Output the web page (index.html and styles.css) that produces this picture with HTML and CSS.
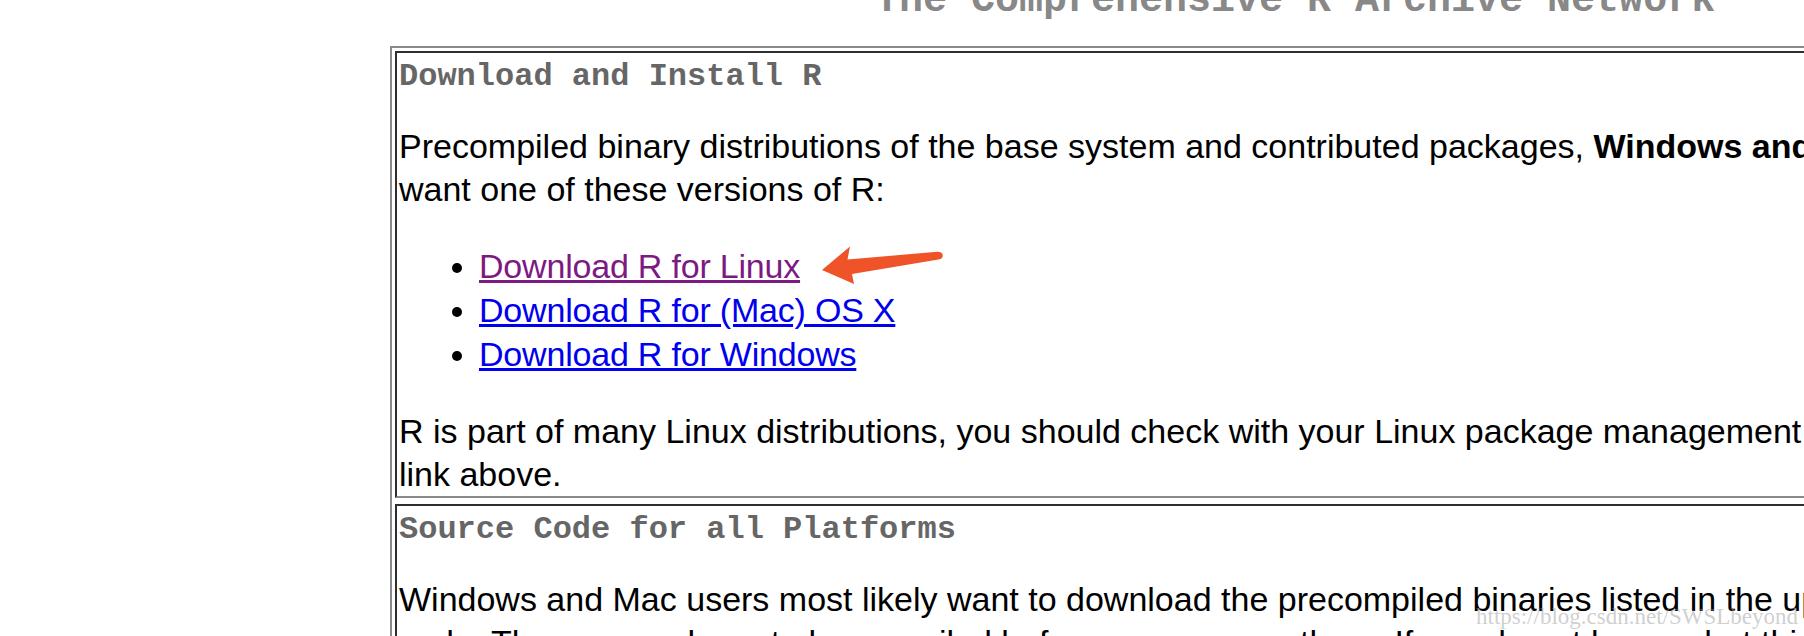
FILE: index.html
```html
<!DOCTYPE html>
<html lang="en">
<head>
    <meta charset="UTF-8">
    <title>The Comprehensive R Archive Network</title>
    <link rel="stylesheet" href="styles.css">
</head>
<body>
    <div class="page">
        <h1 class="site-title">The Comprehensive R Archive Network</h1>
        <div class="frame">
            <!-- 下载安装 -->
            <div class="cell">
                <h3 class="cell-title">Download and Install R</h3>
                <p>Precompiled binary distributions of the base system and contributed packages, <b>Windows and Mac</b> users most likely want one of these versions of R:</p>
                <ul class="dl-list">
                    <li><a class="visited" href="#">Download R for Linux</a></li>
                    <li><a href="#">Download R for (Mac) OS X</a></li>
                    <li><a href="#">Download R for Windows</a></li>
                </ul>
                <p>R is part of many Linux distributions, you should check with your Linux package management system in addition to the link above.</p>
            </div>
            <!-- 源码 -->
            <div class="cell">
                <h3 class="cell-title">Source Code for all Platforms</h3>
                <p>Windows and Mac users most likely want to download the precompiled binaries listed in the upper box, not the source code. The sources have to be compiled before you can use them. If you do not know what this means, you probably do not want to do it!</p>
            </div>
        </div>
    </div>

    <svg class="arrow" width="140" height="54" viewBox="810 236 140 54">
        <path d="M822 270 L850 246.5 L847.5 259.5 L937 251.8 Q942.5 251.6 942.8 255.4 Q942.8 258.8 938.5 259.4 L852 274 L854 284 Z" fill="#ef5428"/>
    </svg>
    <div class="watermark">https://blog.csdn.net/SWSLbeyond</div>
</body>
</html>
```

FILE: styles.css
```css
html,body {
    margin: 0;
    padding: 0;
    background: #fff;
    overflow: hidden;
    font-family: 'Liberation Sans', Arial, sans-serif;
    color: #000;
}
.page {
    padding-left: 390px;
}
.site-title {
    margin: -22px 0 22px 485px;
    font: bold 40px/46px 'Liberation Mono', 'Courier New', monospace;
    color: #888;
    white-space: nowrap;
}
.frame {
    width: 1817px;
    box-sizing: border-box;
    border: 2px solid;
    border-color: #8a8a8a #333 #333 #8a8a8a;
    padding: 3px;
    display: flex;
    flex-direction: column;
    gap: 6px;
}
.cell {
    border: 2px solid;
    border-color: #2e2e2e #8a8a8a #8a8a8a #2e2e2e;
    padding: 0 3px 1px 2px;
    font-size: 34px;
    line-height: 42.5px;
}
.cell-title {
    margin: 0 0 27px 0;
    padding-top: 2px;
    font: bold 32px/43px 'Liberation Mono', 'Courier New', monospace;
    color: #666;
}
.cell p {
    margin: 0;
}
.dl-list {
    margin: 34px 0 34px 0;
    padding-left: 80px;
    line-height: 44px;
}
.dl-list a {
    color: #0000ee;
    letter-spacing: -0.2px;
}
.dl-list a.visited {
    color: #7d1a82;
}
.arrow {
    position: absolute;
    left: 810px;
    top: 236px;
}
.watermark {
    position: absolute;
    left: 1476px;
    top: 605px;
    font: 23px/23px 'Liberation Serif', 'Times New Roman', serif;
    color: rgba(160,160,160,0.5);
    white-space: nowrap;
}
```
